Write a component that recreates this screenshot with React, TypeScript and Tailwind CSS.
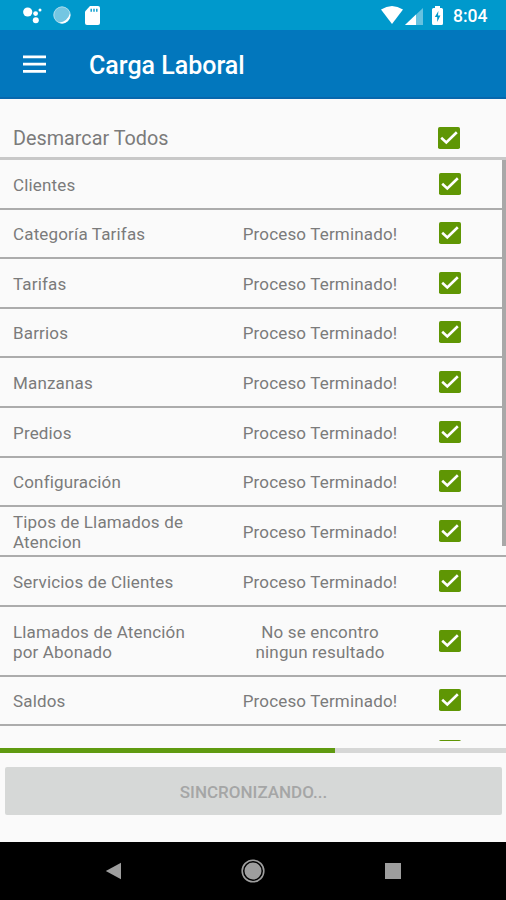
import React from 'react';

type Row = { name: string; status?: string; height: string };

const DONE = 'Proceso Terminado!';

const rows: Row[] = [
  { name: 'Clientes', height: 'h-[50px]' },
  { name: 'Categoría Tarifas', status: DONE, height: 'h-[49px]' },
  { name: 'Tarifas', status: DONE, height: 'h-[50px]' },
  { name: 'Barrios', status: DONE, height: 'h-[49px]' },
  { name: 'Manzanas', status: DONE, height: 'h-[50px]' },
  { name: 'Predios', status: DONE, height: 'h-[50px]' },
  { name: 'Configuración', status: DONE, height: 'h-[49px]' },
  { name: 'Tipos de Llamados de Atencion', status: DONE, height: 'h-[50px]' },
  { name: 'Servicios de Clientes', status: DONE, height: 'h-[50px]' },
  { name: 'Llamados de Atención por Abonado', status: 'No se encontro ningun resultado', height: 'h-[70px]' },
  { name: 'Saldos', status: DONE, height: 'h-[49px]' },
];

function Check() {
  return (
    <svg className="block h-[22px] w-[22px] shrink-0" viewBox="0 0 22 22">
      <rect width="22" height="22" rx="1.8" fill="#5f9604" />
      <path d="M3.2 10.8 8.3 15.4 18.8 5.2" fill="none" stroke="#fff" strokeWidth="2.6" />
    </svg>
  );
}

function StatusBar() {
  return (
    <header className="flex h-[30px] shrink-0 items-center bg-[#0099cc] pl-[23px] pr-[18px] text-white">
      <svg className="h-[18px] w-[19px]" viewBox="0 0 19 18" fill="#fff">
        <circle cx="4.7" cy="6" r="4.6" />
        <circle cx="12.6" cy="7.6" r="2.4" />
        <circle cx="12.8" cy="14.2" r="3" />
        <circle cx="17" cy="4" r="1.5" />
      </svg>
      <svg className="ml-[11px] h-[18px] w-[18px]" viewBox="0 0 18 18">
        <circle cx="9" cy="9" r="8.6" fill="#74c6e2" />
        <circle cx="9" cy="9" r="8.1" fill="none" stroke="#a4d9eb" />
        <path d="M17 7.5A8.2 8.2 0 0 1 6 16.8Q14.5 15.5 17 7.5Z" fill="#fff" />
      </svg>
      <svg className="ml-[14px] h-[19px] w-[15px]" viewBox="0 0 15 19">
        <path d="M5 0H13Q15 0 15 2V17Q15 19 13 19H2Q0 19 0 17V5.5Z" fill="#fff" />
        <path d="M6.2 2.8v3M9 2.8v3M11.8 2.8v3" stroke="#0099cc" strokeWidth="1.4" />
      </svg>
      <div className="grow" />
      <svg className="h-[18px] w-[22px]" viewBox="0 0 22 18">
        <path d="M0 3.5Q11-3.5 22 3.5L11 18Z" fill="#fff" />
      </svg>
      <svg className="ml-[2px] mt-[2px] h-[17px] w-[18px]" viewBox="0 0 18 17">
        <path d="M18 0V17H0Z" fill="#66c2e0" />
        <path d="M11 6.6V17H0Z" fill="#fff" />
      </svg>
      <svg className="ml-[9px] h-[19px] w-[11px]" viewBox="0 0 11 19">
        <path d="M3 0H8V2H9.5Q11 2 11 3.5V17.5Q11 19 9.5 19H1.5Q0 19 0 17.5V3.5Q0 2 1.5 2H3Z" fill="#fff" />
        <path d="M6.4 5 2.8 11H5.2V16L8.4 9.6H6Z" fill="#0099cc" />
      </svg>
      <span className="ml-[10px] w-[35px] whitespace-nowrap pt-[3px] text-[17.5px] font-medium leading-none">8:04</span>
    </header>
  );
}

export default function App() {
  return (
    <main className="flex h-[900px] w-[506px] flex-col overflow-hidden bg-[#fafafa] font-['Roboto','Noto_Sans',sans-serif] text-[#7b7b7b]">
      <StatusBar />
      <div className="flex h-[69px] shrink-0 items-center border-b-2 border-[#0767ad] bg-[#0277bd] pl-[23px] text-white">
        <svg className="h-[18px] w-[23px]" viewBox="0 0 23 18" stroke="#fff" strokeWidth="2.7">
          <path d="M0 1.9H23M0 9.2H23M0 16.3H23" />
        </svg>
        <h1 className="ml-[43px] pt-[4px] text-[25px] font-medium leading-none">Carga Laboral</h1>
      </div>
      <div className="flex h-[61px] shrink-0 items-end justify-between border-b-[3px] border-[#c8c8c8] pb-2 pl-[13px] pr-[46px]">
        <span className="relative top-px text-[19.8px] leading-[23px]">Desmarcar Todos</span>
        <Check />
      </div>
      <section className="relative h-[581px] shrink-0 overflow-hidden">
        {rows.map((r) => (
          <div key={r.name} className={`flex items-center border-b-2 border-[#acacac] pl-[13px] text-[17px] leading-5 tracking-[0.16px] ${r.height}`}>
            <span className="w-[182px] pt-px">{r.name}</span>
            <span className="ml-[42px] w-[166px] pt-px text-center">{r.status}</span>
            <div className="ml-[36px] pb-px"><Check /></div>
          </div>
        ))}
        <div className="flex h-[50px] pl-[439px] pt-[13.5px]"><Check /></div>
        <div className="absolute -top-px right-0 h-[387px] w-[4px] bg-[#a8a8a8]" />
      </section>
      <div className="mt-[7px] h-[5px] shrink-0 bg-[#d6d7d6]">
        <div className="h-full w-[335px] bg-[#5f9a10]" />
      </div>
      <button className="ml-[5px] mt-[14px] h-[48px] w-[497px] shrink-0 rounded-[2px] bg-[#d6d8d7] pt-[3px] text-[17px] font-medium text-[#a5a6a6]">
        SINCRONIZANDO...
      </button>
      <nav className="mt-auto flex h-[58px] shrink-0 items-center bg-black">
        <svg className="ml-[105px] h-[18px] w-[17px]" viewBox="0 0 17 18"><path d="M.8 9 16 .8V17.2Z" fill="#9e9e9e" /></svg>
        <svg className="ml-[119px] h-[24px] w-[24px]" viewBox="0 0 24 24">
          <circle cx="12" cy="12" r="10.8" fill="none" stroke="#9e9e9e" strokeWidth="1.6" />
          <circle cx="12" cy="12" r="8.5" fill="#9e9e9e" />
        </svg>
        <div className="ml-[120px] h-4 w-4 bg-[#9e9e9e]" />
      </nav>
    </main>
  );
}
